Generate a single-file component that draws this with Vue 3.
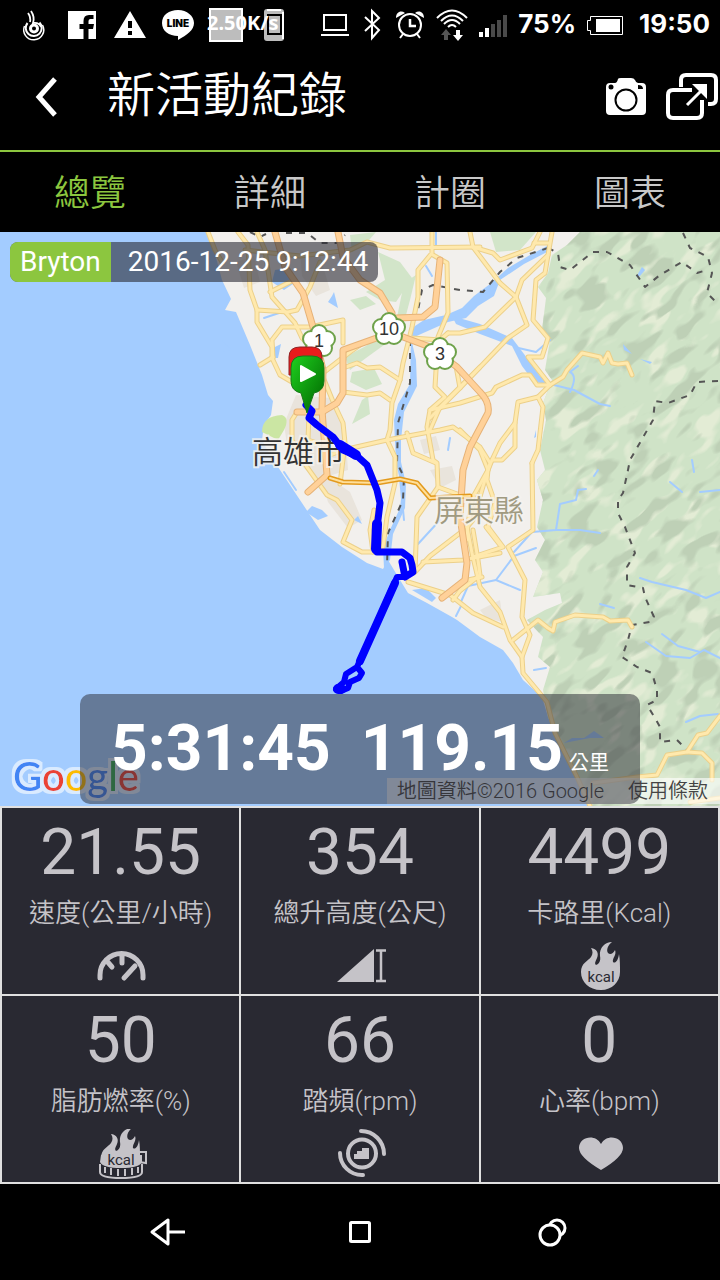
<script setup>
import {ref} from 'vue';

const tabs = ['總覽', '詳細', '計圈', '圖表'];
const activeTab = ref(0);

const stats = [
    {value: '21.55', label: '速度(公里/小時)', icon: 'speed'},
    {value: '354', label: '總升高度(公尺)', icon: 'climb'},
    {value: '4499', label: '卡路里(Kcal)', icon: 'calories'},
    {value: '50', label: '脂肪燃率(%)', icon: 'fat'},
    {value: '66', label: '踏頻(rpm)', icon: 'cadence'},
    {value: '0', label: '心率(bpm)', icon: 'heart'},
];

const flame = 'M26 49C14 49 6 41 6 31C6 22 13 20 16 16C18 13 18 10 16 7C22 8 24 12 22 17C21 20 19 22 21 24C24 23 26 20 25 15C24 7 30 1 37 1C33 4 31 9 33 12C35 14 38 13 40 9C42 14 37 17 38 21C40 23 43 20 44 13C45 18 45 25 45 31C45 41 37 49 26 49Z';

// map geometry
const land = 'M207 232L214 250L222 280L231 299L225 310L236 312L250 345L262 375L268 395L273 401L271 415L264 425L262 440L270 455L280 470L302 503L320 530L342 547L367 563L383 569L388 560L400 580L408 593L427 603L452 617L457 620L480 637L503 650L513 663L523 680L542 697L548 717L560 747L577 780L588 806H720V232Z';
const hills = 'M580 232L567 245L552 255L548 273L538 287L546 298L542 330L550 340L545 370L552 380L543 403L546 420L540 450L545 470L537 480L543 500L537 527L545 540L535 560L543 572L533 597L560 593L562 603L545 610L527 620L543 637L538 657L550 667L543 690L548 717L560 747L577 780L588 806H720V232Z';
const parks = [
    'M378 252L400 262L412 278L396 302L380 300L366 292L385 280Z',
    'M350 300L366 296L376 304L360 310Z',
    'M404 283L416 275L410 300L402 330L396 322Z',
    'M345 357L366 346L378 335L384 345L366 358L350 370Z',
    'M352 372L374 368L382 384L366 390L350 382Z',
    'M362 400L368 396L370 414L352 424Z',
    'M350 235L376 232L364 246L352 252Z',
    'M490 232H536L520 250L496 252Z',
];
const urban = [
    'M296 395L330 398L345 425L348 470L316 480L288 452L284 424Z',
    'M300 250L320 256L330 290L316 296L302 276Z',
    'M318 470L350 492L362 520L348 528L328 502Z',
    'M430 470L452 466L456 480L440 488Z',
    'M480 610L500 600L503 622L486 618Z',
    'M236 262L254 256L260 282L244 288Z',
    'M420 440L436 436L440 450L424 454Z',
];
const water = [
    'M547 246L530 255L508 268L490 284L474 296L462 308L446 315L424 320L412 328L412 338L430 330L448 322L466 318L478 306L494 296L500 280L524 264L547 252Z',
    'M452 316L480 324L512 338L524 354L540 376L548 384L534 382L522 366L512 346L480 334L456 324Z',
    'M411 338L416 360L417 386L404 412L401 440L401 462L406 484L405 508L393 534L390 560L384 568L383 548L390 530L400 508L402 490L396 462L394 420L398 404L410 384Z',
    'M275 270L290 268L296 282L284 290L272 282Z',
    'M332 296L334 292L338 308L328 302Z',
    'M312 506L322 510L328 516L318 520L306 512Z',
    'M412 590L426 588L436 598L432 602Z',
    'M275 347L281 344L278 358L274 358Z',
    'M623 344L632 354L624 350ZM640 359L652 362L650 364Z',
    'M636 277L642 267L645 270L640 276Z',
    'M222 340L231 350L222 352Z',
    'M564 743L572 738L584 738L594 731L604 738L590 738Z',
    'M358 516L362 524L354 520Z',
    'M534 438L536 430L536 437Z',
];
const streams = [
    'M536 548L514 556L496 580L468 586L460 604', 'M496 580L520 590',
    'M514 552L532 532L556 530L560 504L576 500L578 490L586 489', 'M556 530L580 530L600 533',
    'M514 347L536 352L550 340', 'M550 384L574 390L600 404L610 406', 'M570 392Q578 376 570 372L578 366',
    'M640 578L652 582L686 590L706 598L720 592', 'M646 642L666 656L690 658L704 650L720 658',
    'M662 634L678 646L700 652', 'M670 482L682 492', 'M700 492L720 490', 'M692 460L694 472',
    'M686 722L700 716L718 714', 'M418 544L440 520', 'M400 478L404 520', 'M426 266L432 276', 'M436 232V246',
    'M284 472L296 490', 'M450 438L448 450', 'M598 470L594 476', 'M534 670L546 668',
    'M264 318L282 312', 'M456 616L462 604', 'M600 604L614 608',
];
const roads = [
    'M208 232L215 250L222 262', 'M238 232L248 245L250 290L257 310L257 322L272 347L272 358L280 375L292 382',
    'M257 232L265 250L272 297L295 323L302 338L314 350', 'M270 292L290 282', 'M257 310L288 312L297 310L310 287L320 262',
    'M273 358L272 340L282 327L310 327L343 320V343', 'M260 365L273 357',
    'M245 250L262 252L300 256L350 250L367 242L390 248L480 247',
    'M432 232V253L418 270V297L412 327L403 363L400 380L392 403L390 430L387 440L395 457V483L387 517L383 547',
    'M433 255L447 263L448 313L438 337L435 387L445 397L430 410L427 427L433 460L437 463L438 487L417 517L415 572',
    'M408 582L450 595L473 613L503 627', 'M467 527L472 553L480 587L500 612L510 640L522 657L523 673L547 702L555 733L577 777L590 806',
    'M532 463L533 530L508 547L525 580L522 617L530 635L522 657', 'M513 640L538 620L548 628L553 631L555 622L575 615L603 617L610 621L628 620L632 627',
    'M720 716L707 733L698 735L687 752L667 755L657 775L637 777L593 783', 'M687 752L702 753L712 763V780', 'M690 802L720 798',
    'M448 333H460L485 327L516 297L527 325L508 338L460 388L430 418', 'M470 232L473 247L500 283L516 297',
    'M473 247L493 253L500 260L532 248L540 232', 'M534 243H548', 'M516 297L522 280L548 255L552 232',
    'M548 255L545 273L536 280L533 320L548 338L542 357L528 357L550 385', 'M430 410L460 403L492 393L496 387L522 375H530L537 385H550',
    'M550 385L563 377L567 370L582 353L600 357L603 363L608 353L612 363L618 364L627 363L632 375',
    'M550 385L538 397L543 407L538 450L532 463', 'M538 397L518 402L515 423L500 443L492 460L488 470L473 497L468 523L467 540',
    'M515 423V447L502 460H492', 'M460 430L480 450L488 470L487 480L495 503L488 527L503 547L473 557',
    'M343 368L357 363L367 368L380 367L400 380', 'M343 392L367 395L380 393L390 400', 'M323 373L350 352L360 345',
    'M323 377L334 404L343 423L345 443L340 484', 'M330 455L343 450L387 440L440 430L453 427L480 447L490 463L473 520L467 527',
    'M480 367L440 407L430 430', 'M407 433L413 453L436 463',
    'M297 412L292 420V440L307 467L327 495L337 500L352 520L343 542L362 552H373', 'M309 414L308 440L320 444',
    'M415 572L430 556L460 533', 'M423 562L463 560L500 553', 'M453 600L468 580L482 577', 'M373 552L370 530L374 510', 'M486 527L500 545',
    'M438 487L460 495', 'M473 530L478 560L480 575L461 590', 'M398 337L440 340L448 333', 'M456 366L460 388',
];
const highways = [
    'M275 232L285 267L303 293L313 327L323 370L322 410L325 450L327 475L308 492',
    'M338 232L343 257L360 280L380 293L392 313V325', 'M397 318L423 317L435 307L440 260',
    'M385 335L343 350V393L337 403L322 412H297', 'M395 334L430 347L457 367L480 392Q490 402 488 413L470 447L463 470L461 500L460 517L467 563L465 580L442 598',
];
const toll = 'M330 478L343 482L377 483L400 479L417 483L430 498L470 496';
const borders = [
    'M250 232L260 237L266 234M286 233H307L320 243H337L345 235', 'M548 248L517 258L500 272L483 292L460 290L433 285L422 290L418 310L410 337V383L398 423L397 463L404 477L403 500L388 533L387 567',
    'M548 248L558 253L560 267L570 270L593 252H607L630 265L645 287L660 275L682 262L697 273L707 270', 'M683 233L690 248L708 257L712 273L707 293L717 303',
    'M718 381L697 382L690 395L668 403L655 401L653 420L630 460L628 470L623 493L618 500V513L625 527L635 553L627 567V585L643 588L645 597L654 617L650 622L632 625L628 640L622 657L637 667L652 673L657 690V700L647 705L655 718L660 727V742L677 740L687 750',
];
const shields = [
    {x: 319, y: 341, text: '1'},
    {x: 389, y: 329, text: '10'},
    {x: 440, y: 354, text: '3'},
];
const petals = [[0, -8], [8, -2], [5, 7], [-5, 7], [-8, -2]];
</script>

<template>
    <div class="phone">
        <div class="status">
            <div class="notices">
                <svg width="48" height="48" viewBox="0 0 48 48">
                    <g fill="none" stroke="#fff" stroke-width="2">
                        <circle cx="24" cy="28.500" r="3.500" stroke-width="3" />
                        <path d="M17.500 23a8 8 0 1 0 12 -.5" />
                        <path d="M14.500 26a10 10 0 1 0 18 -1" stroke-width="1.500" />
                        <path d="M18 13q3 4 2 9M21 11q4 6 2 12q6 -1 8 4" stroke-width="1.800" />
                    </g>
                </svg>
                <svg width="48" height="48" viewBox="0 0 48 48">
                    <path fill="#fff" d="M10 11h28v28h-7.500V29h4.500l1-5h-5.500v-3q0-2 2-2h3v-4h-4.500q-5.500 0-5.500 6v3h-4v5h4v10H10z" />
                </svg>
                <svg width="48" height="48" viewBox="0 0 48 48">
                    <path fill="#fff" fill-rule="evenodd" d="M24 11L40 38H8zM22 21v7h4v-7zM22 31v4h4v-4z" />
                </svg>
                <svg width="48" height="48" viewBox="0 0 48 48">
                    <path fill="#fff" d="M24 10c9 0 16 6 16 13c0 7-7 12-16 17v-4c-9 0-16-5-16-13s7-13 16-13z" />
                    <text class="line-text" x="24" y="27" text-anchor="middle">LINE</text>
                </svg>
                <div class="speed">
                    <svg width="82" height="48" viewBox="0 0 82 48">
                        <rect x="8" y="9" width="32" height="32" fill="#bdbdbd" stroke="#fff" stroke-width="2" />
                        <rect x="62" y="9" width="20" height="32" rx="3" fill="#bdbdbd" />
                        <path d="M81 12v27M65 10h14" stroke="#fff" stroke-width="2" />
                        <path d="M66 15h13v19H66z" fill="none" stroke="#000" stroke-width="2" />
                    </svg>
                    <span>2.50K/s</span>
                </div>
            </div>
            <div class="system">
                <svg width="32" height="36" viewBox="0 0 32 36">
                    <path d="M5 9h22v15H5zM2 29h28" fill="none" stroke="#fff" stroke-width="2" />
                </svg>
                <svg width="22" height="36" viewBox="0 0 22 36">
                    <path d="M3 11L17 24L10 32V5l7 7L3 25" fill="none" stroke="#fff" stroke-width="2" />
                </svg>
                <svg width="30" height="36" viewBox="0 0 30 36">
                    <g fill="none" stroke="#fff" stroke-width="2">
                        <circle cx="15" cy="19" r="11" />
                        <path d="M8 28l-3 4M22 28l3 4" />
                        <path d="M15 13v7h6" stroke-width="2.500" />
                    </g>
                    <path d="M1 12c0-6 5-8 9-5zM29 12c0-6-5-8-9-5z" fill="#fff" />
                </svg>
                <svg width="32" height="36" viewBox="0 0 32 36">
                    <g fill="none" stroke="#fff" stroke-width="2">
                        <path d="M1 12q15 -15 30 0M5 15q11 -11 22 0M8 18q8 -8 16 0M12 21q4 -4 8 0" />
                    </g>
                    <path d="M10 23l5 6h-3v5H8v-5H5z" fill="#555" />
                    <path d="M22 35l5-6h-3v-5h-4v5h-3z" fill="#fff" />
                </svg>
                <svg width="28" height="36" viewBox="0 0 28 36">
                    <path d="M0 26h4v5H0zM6 22h4v9H6z" fill="#fff" />
                    <path d="M12 18h4v13h-4zM18 14h4v17h-4zM24 9h4v22h-4z" fill="#4a4a4a" />
                </svg>
                <span>75%</span>
                <svg width="41" height="36" viewBox="0 0 41 36">
                    <path d="M3.500 10.500h32v18h-32v-4h-3v-10h3z" fill="none" stroke="#fff" />
                    <path d="M9 13h24v13H9z" fill="#fff" />
                </svg>
                <span>19:50</span>
            </div>
        </div>

        <header class="title-bar">
            <button class="back" aria-label="返回">
                <svg width="24" height="40" viewBox="0 0 24 40">
                    <path d="M21 2L5 20L21 38" fill="none" stroke="#fff" stroke-width="5" />
                </svg>
            </button>
            <h1>新活動紀錄</h1>
            <button aria-label="相機">
                <svg width="40" height="44" viewBox="0 0 40 44">
                    <path fill="#fff" d="M4 8h5q2 0 3-4q0-1 3-1h10q3 0 4 2q1 3 3 3h4q4 0 4 4v24q0 4-4 4H4q-4 0-4-4V12q0-4 4-4z" />
                    <circle cx="20" cy="25" r="10.500" fill="none" stroke="#000" stroke-width="2" />
                    <circle cx="5" cy="12" r="2.500" fill="#000" />
                    <path d="M32 10q5 0 5 4h-5z" fill="#000" />
                </svg>
            </button>
            <button aria-label="分享">
                <svg width="52" height="48" viewBox="0 0 52 48">
                    <g fill="none" stroke="#fff" stroke-width="4">
                        <path d="M26 17H7q-5 0-5 5v18q0 5 5 5h24q5 0 5-5V27" />
                        <path d="M15 14V7q0-5 5-5h25q5 0 5 5v19q0 5-5 5h-3" />
                        <path d="M21 32L35 18" stroke-width="3" />
                    </g>
                    <path d="M26 11h15v15z" fill="#fff" />
                </svg>
            </button>
        </header>

        <nav class="tabs">
            <button v-for="(tab, i) in tabs" :key="tab" :class="{active: activeTab === i}" @click="activeTab = i">{{ tab }}</button>
        </nav>

        <div class="map">
            <svg class="canvas" viewBox="0 232 720 574" preserveAspectRatio="xMidYMid slice">
                <defs>
                    <filter id="light" x="0" y="0" width="100%" height="100%" color-interpolation-filters="sRGB">
                        <feTurbulence type="fractalNoise" baseFrequency="0.03 0.07" numOctaves="2" seed="4" />
                        <feColorMatrix values="0 0 0 0 0.89  0 0 0 0 0.925  0 0 0 0 0.835  9 0 0 0 -4.900" />
                    </filter>
                    <filter id="dark" x="0" y="0" width="100%" height="100%" color-interpolation-filters="sRGB">
                        <feTurbulence type="fractalNoise" baseFrequency="0.03 0.07" numOctaves="2" seed="11" />
                        <feColorMatrix values="0 0 0 0 0.745  0 0 0 0 0.815  0 0 0 0 0.715  9 0 0 0 -4.800" />
                    </filter>
                    <filter id="halo" x="-10%" y="-10%" width="120%" height="120%">
                        <feMorphology in="SourceAlpha" operator="dilate" radius="3" result="fat" />
                        <feFlood flood-color="#fff" flood-opacity="0.6" />
                        <feComposite in2="fat" operator="in" result="glow" />
                        <feMerge>
                            <feMergeNode in="glow" />
                            <feMergeNode in="SourceGraphic" />
                        </feMerge>
                    </filter>
                    <clipPath id="hills"><path :d="hills" /></clipPath>
                    <linearGradient id="green" x1="0" y1="0" x2="1" y2="1">
                        <stop offset="0" stop-color="#1ed01e" />
                        <stop offset="1" stop-color="#006400" />
                    </linearGradient>
                </defs>
                <rect y="232" width="720" height="574" fill="#a3ccff" />
                <path :d="land" fill="#f2f0ed" />
                <path v-for="d in urban" :key="d" :d="d" fill="#e9e4dc" />
                <path v-for="d in parks" :key="d" :d="d" fill="#d2e5c9" />
                <path d="M262 432Q262 416 282 415Q290 418 284 430L278 440Z" fill="#cbe6a3" />
                <g clip-path="url(#hills)">
                    <rect x="520" y="232" width="200" height="574" fill="#cfe3c7" />
                    <g transform="rotate(-42 620 520)">
                        <rect x="260" y="170" width="720" height="700" filter="url(#light)" />
                        <rect x="260" y="170" width="720" height="700" filter="url(#dark)" />
                    </g>
                </g>
                <path v-for="d in water" :key="d" :d="d" fill="#a3ccff" />
                <g fill="none" stroke-linejoin="round" stroke-linecap="round">
                    <path v-for="d in streams" :key="d" :d="d" stroke="#a3ccff" stroke-width="2" />
                    <path v-for="d in borders" :key="d" :d="d" class="border-line" />
                    <path v-for="d in roads" :key="d" :d="d" stroke="#ecd08a" stroke-width="5" />
                    <path v-for="d in roads" :key="d" :d="d" stroke="#ffe9ad" stroke-width="3" />
                    <path v-for="d in highways" :key="d" :d="d" stroke="#e6b277" stroke-width="7" />
                    <path v-for="d in highways" :key="d" :d="d" stroke="#ffd199" stroke-width="5" />
                    <path :d="toll" stroke="#e39a1c" stroke-width="5" />
                    <path :d="toll" stroke="#ffdf9a" stroke-width="2" />
                </g>
                <g v-for="s in shields" :key="s.text" :transform="`translate(${s.x} ${s.y})`">
                    <circle v-for="(p, i) in petals" :key="i" :cx="p[0]" :cy="p[1]" r="7" fill="#fff" stroke="#6ea24a" stroke-width="4" />
                    <circle v-for="(p, i) in petals" :key="i" :cx="p[0]" :cy="p[1]" r="7" fill="#fff" />
                    <circle r="7" fill="#fff" />
                    <text class="shield" y="6" text-anchor="middle">{{ s.text }}</text>
                </g>
                <text class="city" x="252" y="463">高雄市</text>
                <text class="county" x="434" y="521">屏東縣</text>
                <g fill="none" stroke="#00f" stroke-width="8" stroke-linejoin="round" stroke-linecap="round">
                    <path d="M306 405L312 411L309 418L317 425L333 437L343 450L357 456L367 465L377 490L380 503L378 520L377 552L402 552L410 558L412 565L413 572L405 577L402 562" stroke-width="7" />
                    <path d="M405 577L397 577L379 618L357 667L362 673L359 678L350 682L348 688L341 691L336 689L344 682L346 674L357 667" stroke-width="6" />
                    <path d="M340 445L356 455M377 524L376 549M341 689L338 689" stroke-width="10" />
                    <path d="M395 583L360 661" />
                </g>
                <path d="M300 347h12q10 0 10 10v18h-33v-18q0-10 11-10z" fill="#e81c1c" stroke="#8f2222" />
                <path d="M303 356h9q12 0 12 12v13q0 10-10 12l-7 20l-6-20q-10-2-10-12v-13q0-12 12-12z" fill="url(#green)" stroke="#187818" />
                <path d="M301 366L315 374L301 381Z" fill="#fff" stroke="#fff" stroke-width="2" stroke-linejoin="round" />
            </svg>

            <div class="badge"><b>Bryton</b><time>2016-12-25 9:12:44</time></div>

            <svg class="google" width="140" height="56" viewBox="0 0 140 56" aria-label="Google">
                <text x="3" y="41" filter="url(#halo)"><tspan fill="#4285f4">G</tspan><tspan fill="#ea4335">o</tspan><tspan fill="#fbbc05">o</tspan><tspan fill="#4285f4">g</tspan><tspan fill="#34a853">l</tspan><tspan fill="#ea4335">e</tspan></text>
            </svg>
            <div class="credit"><span>地圖資料©2016 Google</span><a href="#terms">使用條款</a></div>
            <div class="summary"><strong>5:31:45</strong><strong>119.15</strong><span>公里</span></div>
        </div>

        <ul class="stats">
            <li v-for="s in stats" :key="s.icon">
                <div class="value">{{ s.value }}</div>
                <div class="label">{{ s.label }}</div>
                <svg width="52" height="50" viewBox="0 0 52 50">
                    <g v-if="s.icon === 'speed'" fill="none" stroke="#c5c3c8" stroke-width="5" stroke-linecap="round">
                        <path d="M5 37v-3a21 21 0 0 1 43 0v3M27 13v9M11 19l6 7M40 25L29 37" />
                    </g>
                    <g v-else-if="s.icon === 'climb'">
                        <path d="M3 41H40V8z" fill="#c5c3c8" />
                        <path d="M42 9.500h10M42 40h10M47 9v31" stroke="#c5c3c8" stroke-width="2.500" />
                    </g>
                    <g v-else-if="s.icon === 'calories'" transform="translate(2 0)">
                        <path :d="flame" fill="#c5c3c8" />
                        <text class="kcal" x="26" y="41" text-anchor="middle">kcal</text>
                    </g>
                    <g v-else-if="s.icon === 'fat'">
                        <path :d="flame" fill="#c5c3c8" transform="translate(0 -2)" />
                        <path d="M5 35V43q0 6 21 6t21 -6V35" fill="#292932" stroke="#c5c3c8" stroke-width="2" />
                        <path d="M5 33q3 6 21 6t21 -6v-7H6z" fill="#c5c3c8" />
                        <path d="M10 38v6M16 39v7M23 40v7M30 40v7M37 39v7M43 38v6" stroke="#c5c3c8" stroke-width="2" />
                        <path d="M44 23h7v11l-7-1" fill="none" stroke="#c5c3c8" stroke-width="2" />
                        <text class="kcal" x="26" y="36" text-anchor="middle">kcal</text>
                    </g>
                    <g v-else-if="s.icon === 'cadence'">
                        <g fill="none" stroke="#c5c3c8" stroke-width="4" stroke-linecap="round">
                            <circle cx="28" cy="24.500" r="14" />
                            <path d="M27 2a23 23 0 0 1 23 23M6 24a22 22 0 0 0 23 22" />
                        </g>
                        <path d="M20 30v-5h3v-3h5v-3h7v11z" fill="#c5c3c8" />
                    </g>
                    <path v-else fill="#c5c3c8" d="M28 41Q6 28 6 19C6 8 22 4 28 15C34 4 50 8 50 19Q50 28 28 41z" />
                </svg>
            </li>
        </ul>

        <nav class="keys">
            <button aria-label="Back">
                <svg width="40" height="40" viewBox="0 0 40 40">
                    <path d="M20 8v24L4 20zM20 20h17" fill="none" stroke="#fff" stroke-width="3" stroke-linejoin="round" />
                </svg>
            </button>
            <button aria-label="Home">
                <svg width="40" height="40" viewBox="0 0 40 40">
                    <rect x="10.500" y="10.500" width="19" height="19" rx="1" fill="none" stroke="#fff" stroke-width="3" />
                </svg>
            </button>
            <button aria-label="Recent">
                <svg width="40" height="40" viewBox="0 0 40 40">
                    <circle cx="25" cy="16" r="8" fill="none" stroke="#fff" stroke-width="3" />
                    <circle cx="18" cy="23" r="10" fill="#000" stroke="#fff" stroke-width="3" />
                </svg>
            </button>
        </nav>
    </div>
</template>

<style>
body {
    margin: 0;
    background: #000;
}
</style>

<style scoped>
.phone {
    display: flex;
    flex-direction: column;
    min-height: 100vh;
    background: #000;
    color: #fff;
    font-family: Roboto, "Noto Sans CJK TC", sans-serif;
}

button {
    padding: 0;
    border: 0;
    background: none;
    color: inherit;
    font: inherit;
    cursor: pointer;
}

svg {
    display: block;
    flex: none;
}

.status {
    display: flex;
    justify-content: space-between;
    height: 48px;
    padding: 0 10px;
}

.notices {
    display: flex;
}

.line-text {
    font: 900 10px Inter, sans-serif;
}

.speed {
    position: relative;
}

.speed span {
    position: absolute;
    left: 5px;
    top: 9px;
    font: 700 20px/28px "Noto Sans", sans-serif;
}

.system {
    display: flex;
    align-items: center;
    gap: 11px;
    font: 700 26px/36px Inter, sans-serif;
}

.title-bar {
    display: flex;
    align-items: center;
    height: 98px;
    padding-bottom: 4px;
    border-bottom: 2px solid #8cc63f;
}

.title-bar .back {
    display: flex;
    width: 107px;
    padding-left: 34px;
}

.title-bar h1 {
    flex: 1;
    margin: 0 0 2px;
    font-size: 48px;
    font-weight: 350;
    line-height: 72px;
}

.title-bar button + button {
    margin: 0 2px 0 20px;
}

.tabs {
    display: grid;
    grid-template-columns: repeat(4, 1fr);
    height: 80px;
}

.tabs button {
    padding-bottom: 4px;
    color: #c8c8c8;
    font-size: 36px;
    font-weight: 350;
}

.tabs .active {
    color: #8cc63f;
}

.map {
    position: relative;
    flex: 1;
    min-height: 480px;
    overflow: hidden;
}

.canvas {
    position: absolute;
    width: 100%;
    height: 100%;
}

.border-line {
    stroke: #555;
    stroke-width: 2;
    stroke-dasharray: 6 7;
    stroke-linecap: butt;
}

.shield {
    font: 18px "Liberation Sans", sans-serif;
    fill: #333;
}

.city, .county {
    font-family: "Noto Sans CJK TC", sans-serif;
    font-size: 31px;
    font-weight: 350;
    fill: #333;
    stroke: rgba(245, 243, 240, 0.8);
    stroke-width: 4px;
    paint-order: stroke;
}

.county {
    font-size: 30px;
    fill: #a09a80;
}

.badge {
    position: absolute;
    left: 10px;
    top: 10px;
    display: flex;
    border-radius: 8px;
    overflow: hidden;
    background: rgba(40, 40, 50, 0.6);
    font-size: 28px;
    line-height: 40px;
}

.badge b {
    padding: 0 10px;
    background: #8cc63f;
    font-weight: 400;
}

.badge time {
    padding: 0 10px 0 17px;
}

.google {
    position: absolute;
    left: 10px;
    bottom: 0;
    font: 500 40px Lato, sans-serif;
}

.credit {
    position: absolute;
    right: 0;
    bottom: 2px;
    display: flex;
    gap: 24px;
    padding: 0 12px 0 10px;
    background: rgba(255, 255, 255, 0.6);
    color: #444;
    font-size: 20px;
    font-weight: 350;
    line-height: 26px;
}

.credit a {
    color: inherit;
    text-decoration: none;
}

.summary {
    position: absolute;
    left: 80px;
    right: 80px;
    bottom: 2px;
    display: flex;
    align-items: baseline;
    justify-content: center;
    height: 110px;
    border-radius: 10px;
    background: rgba(40, 40, 50, 0.5);
    font-size: 20px;
    line-height: 110px;
}

.summary strong {
    font-size: 64px;
}

.summary strong + strong {
    margin: 0 6px 0 30px;
}

.stats {
    display: grid;
    grid-template-columns: repeat(3, 1fr);
    gap: 2px;
    margin: 0;
    padding: 2px;
    list-style: none;
    background: #e0e0e0;
}

.stats li {
    display: flex;
    flex-direction: column;
    align-items: center;
    gap: 12px;
    padding: 13px 0 3px;
    background: #292932;
    color: #c5c3c8;
}

.value {
    font-size: 64px;
    line-height: 64px;
}

.label {
    font-size: 26px;
    font-weight: 350;
    line-height: 32px;
}

.kcal {
    font: 15px Roboto, sans-serif;
    fill: #292932;
}

.keys {
    display: flex;
    justify-content: center;
    height: 96px;
}

.keys button {
    display: flex;
    align-items: center;
    justify-content: center;
    width: 192px;
}
</style>
